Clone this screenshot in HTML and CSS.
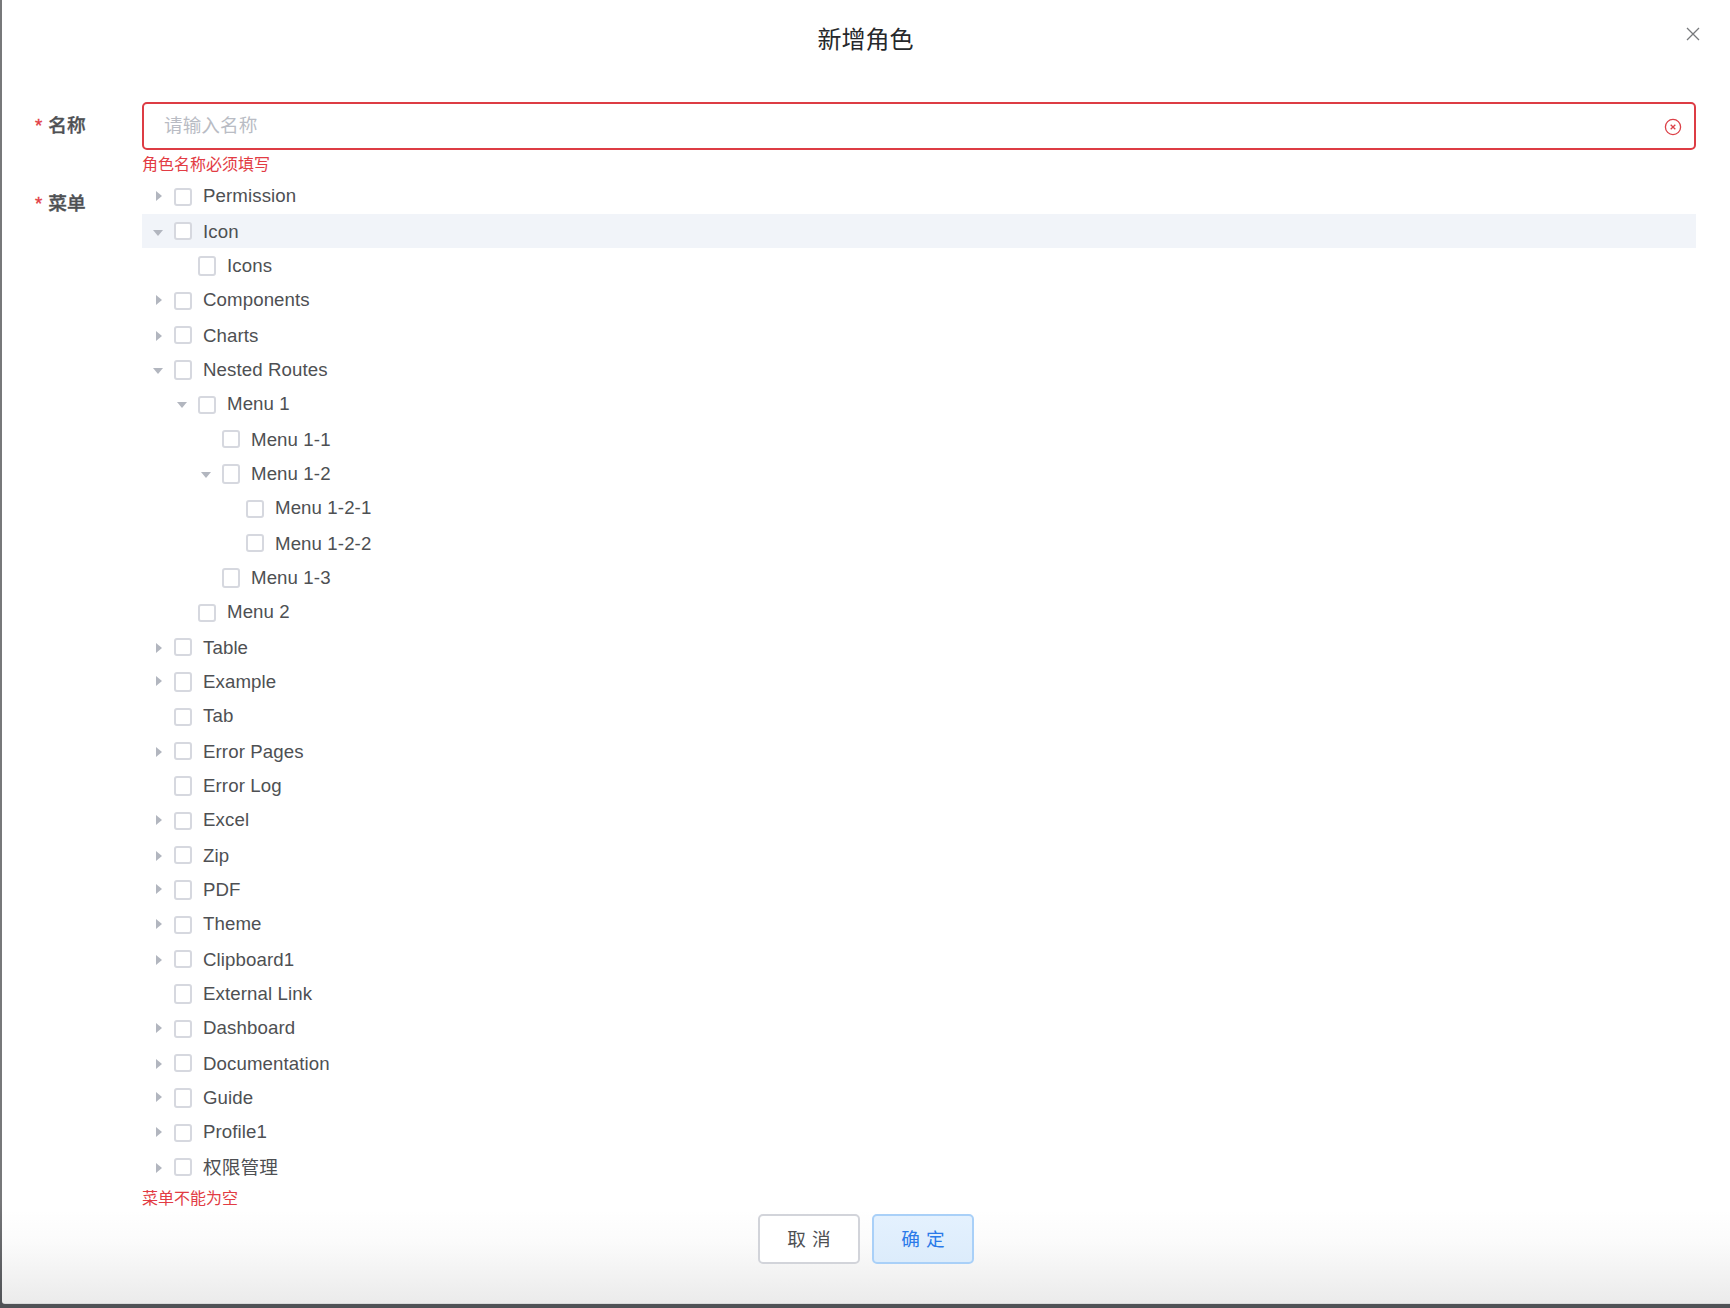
FILE: index.html
```html
<!DOCTYPE html>
<html lang="zh-CN">
<head>
<meta charset="utf-8">
<title>新增角色</title>
<link rel="stylesheet" href="styles.css">
</head>
<body>
<main class="dialog">
  <header class="dialog-header">
    <h1 class="dialog-title">新增角色</h1>
    <button class="dialog-close" aria-label="关闭"><svg width="14" height="14" viewBox="0 0 14 14"><path d="M1 1l12 12M13 1L1 13"/></svg></button>
  </header>
  <form class="form">
    <div class="form-item name-item">
      <div class="form-label"><span class="required">*</span>名称</div>
      <div class="form-content">
        <div class="input is-error">
          <span class="placeholder">请输入名称</span>
          <svg class="input-icon" width="18" height="18" viewBox="0 0 18 18"><circle cx="9" cy="9" r="7.6"/><path d="M6.7 6.7l4.6 4.6M11.3 6.7l-4.6 4.6"/></svg>
        </div>
        <div class="form-error">角色名称必须填写</div>
      </div>
    </div>
    <div class="form-item menu-item">
      <div class="form-label"><span class="required">*</span>菜单</div>
      <div class="form-content">
        <ul class="tree">
          <li class="node"><i class="caret right"></i><i class="box"></i><span class="text">Permission</span></li>
          <li class="node current"><i class="caret down"></i><i class="box"></i><span class="text">Icon</span></li>
          <li class="node level-2"><i class="caret"></i><i class="box"></i><span class="text">Icons</span></li>
          <li class="node"><i class="caret right"></i><i class="box"></i><span class="text">Components</span></li>
          <li class="node"><i class="caret right"></i><i class="box"></i><span class="text">Charts</span></li>
          <li class="node"><i class="caret down"></i><i class="box"></i><span class="text">Nested Routes</span></li>
          <li class="node level-2"><i class="caret down"></i><i class="box"></i><span class="text">Menu 1</span></li>
          <li class="node level-3"><i class="caret"></i><i class="box"></i><span class="text">Menu 1-1</span></li>
          <li class="node level-3"><i class="caret down"></i><i class="box"></i><span class="text">Menu 1-2</span></li>
          <li class="node level-4"><i class="caret"></i><i class="box"></i><span class="text">Menu 1-2-1</span></li>
          <li class="node level-4"><i class="caret"></i><i class="box"></i><span class="text">Menu 1-2-2</span></li>
          <li class="node level-3"><i class="caret"></i><i class="box"></i><span class="text">Menu 1-3</span></li>
          <li class="node level-2"><i class="caret"></i><i class="box"></i><span class="text">Menu 2</span></li>
          <li class="node"><i class="caret right"></i><i class="box"></i><span class="text">Table</span></li>
          <li class="node"><i class="caret right"></i><i class="box"></i><span class="text">Example</span></li>
          <li class="node"><i class="caret"></i><i class="box"></i><span class="text">Tab</span></li>
          <li class="node"><i class="caret right"></i><i class="box"></i><span class="text">Error Pages</span></li>
          <li class="node"><i class="caret"></i><i class="box"></i><span class="text">Error Log</span></li>
          <li class="node"><i class="caret right"></i><i class="box"></i><span class="text">Excel</span></li>
          <li class="node"><i class="caret right"></i><i class="box"></i><span class="text">Zip</span></li>
          <li class="node"><i class="caret right"></i><i class="box"></i><span class="text">PDF</span></li>
          <li class="node"><i class="caret right"></i><i class="box"></i><span class="text">Theme</span></li>
          <li class="node"><i class="caret right"></i><i class="box"></i><span class="text">Clipboard1</span></li>
          <li class="node"><i class="caret"></i><i class="box"></i><span class="text">External Link</span></li>
          <li class="node"><i class="caret right"></i><i class="box"></i><span class="text">Dashboard</span></li>
          <li class="node"><i class="caret right"></i><i class="box"></i><span class="text">Documentation</span></li>
          <li class="node"><i class="caret right"></i><i class="box"></i><span class="text">Guide</span></li>
          <li class="node"><i class="caret right"></i><i class="box"></i><span class="text">Profile1</span></li>
          <li class="node"><i class="caret right"></i><i class="box"></i><span class="text">权限管理</span></li>
        </ul>
        <div class="form-error">菜单不能为空</div>
      </div>
    </div>
  </form>
  <footer class="dialog-footer">
    <button class="button">取 消</button>
    <button class="button primary">确 定</button>
  </footer>
</main>
</body>
</html>
```
FILE: styles.css
```css
* {
  box-sizing: border-box;
}

body {
  margin: 0;
  height: 1308px;
  overflow: hidden;
  padding-left: 2px;
  background: linear-gradient(#77787a 0, #77787a 1200px, #505256 1304px);
  font-family: "Liberation Sans", "Noto Sans CJK SC", sans-serif;
  font-size: 18.67px;
  color: #4e5053;
}

.dialog {
  display: flex;
  flex-direction: column;
  height: 1304px;
  border-bottom-left-radius: 3px;
  background: linear-gradient(#fff 0, #fff 1210px, #fbfbfb 1242px, #ebebeb 1303px, #c9cacb 1304px);
}

.dialog-header {
  display: grid;
  grid-template-columns: 1fr auto 1fr;
  height: 102px;
  padding: 20px 31px 0 30px;
}

.dialog-title {
  grid-column: 2;
  margin: 0;
  height: 40px;
  line-height: 40px;
  font-size: 24px;
  font-weight: 400;
  color: #26282b;
}

.dialog-close {
  justify-self: end;
  height: 14px;
  margin: 7px -1px 0 0;
  padding: 0;
  border: 0;
  background: none;
}

.dialog-close svg {
  display: block;
  fill: none;
  stroke: #77797c;
  stroke-width: 1.3;
}

.form-item {
  display: flex;
  padding-right: 34px;
}

.name-item {
  height: 77px;
}

.form-label {
  width: 140px;
  height: 48px;
  padding-left: 33px;
  line-height: 48px;
  font-weight: 500;
  -webkit-text-stroke: 0.35px;
}

.required {
  margin-right: 6px;
  color: #e23c44;
}

.form-content {
  flex: 1;
}

.input {
  display: flex;
  align-items: center;
  justify-content: space-between;
  height: 48px;
  padding: 0 12px 0 20px;
  border: 2px solid #dd3c44;
  border-radius: 5px;
  background: #fff;
}

.placeholder {
  height: 44px;
  line-height: 44px;
  color: #b9bcc4;
}

.input-icon {
  margin-top: 2px;
  fill: none;
  stroke: #dc4148;
  stroke-width: 1.3;
}

.form-error {
  height: 30px;
  line-height: 30px;
  font-size: 16px;
  color: #e23c44;
}

.menu-item .form-label {
  margin-top: 1px;
}

.tree {
  margin: 0;
  padding: 0;
  list-style: none;
}

.node {
  display: flex;
  height: 35px;
  padding-left: 8px;
}

.node:nth-child(3n + 2) {
  height: 34px;
}

.current {
  background: #f1f4f9;
}

.node.level-2 {
  padding-left: 32px;
}

.node.level-3 {
  padding-left: 56px;
}

.node.level-4 {
  padding-left: 80px;
}

.caret {
  width: 24px;
  height: 34px;
  flex: none;
}

.caret::before {
  content: "";
  display: block;
}

.right::before {
  width: 6px;
  height: 10px;
  margin: 12px 0 0 6px;
  background: #b2b6bf;
  clip-path: polygon(0 0, 100% 50%, 0 100%);
}

.node:nth-child(3n + 2) .right::before {
  margin-top: 13px;
}

.down::before {
  width: 10px;
  height: 6px;
  margin: 16px 0 0 3px;
  background: #b2b6bf;
  clip-path: polygon(0 0, 100% 0, 50% 100%);
}

.node:nth-child(3n + 1) .down::before {
  margin-top: 15px;
}

.box {
  flex: none;
  width: 18px;
  height: 18px;
  margin: 8px 11px 0 0;
  border: 2px solid #d6d8df;
  border-radius: 3px;
  background: #fff;
}

.node:nth-child(3n + 1) .box {
  margin-top: 9px;
}

.node:nth-child(3n) .box {
  height: 20px;
}

.text {
  height: 34px;
  margin-top: 1px;
  line-height: 34px;
  letter-spacing: 0.1px;
}

.node:nth-child(3n + 1) .text {
  margin-top: 0;
}

.dialog-footer {
  display: flex;
  justify-content: center;
  gap: 12px;
}

.button {
  width: 102px;
  height: 50px;
  padding: 1px 0 0;
  border: 2px solid #d2d4da;
  border-radius: 5px;
  background: #fff;
  font: inherit;
  line-height: 45px;
  word-spacing: 0.8px;
  color: #4e5053;
}

.primary {
  border-color: #a9d0f8;
  background: linear-gradient(#e4f1fe, #dcecfb);
  color: #2b7ae9;
}
```
